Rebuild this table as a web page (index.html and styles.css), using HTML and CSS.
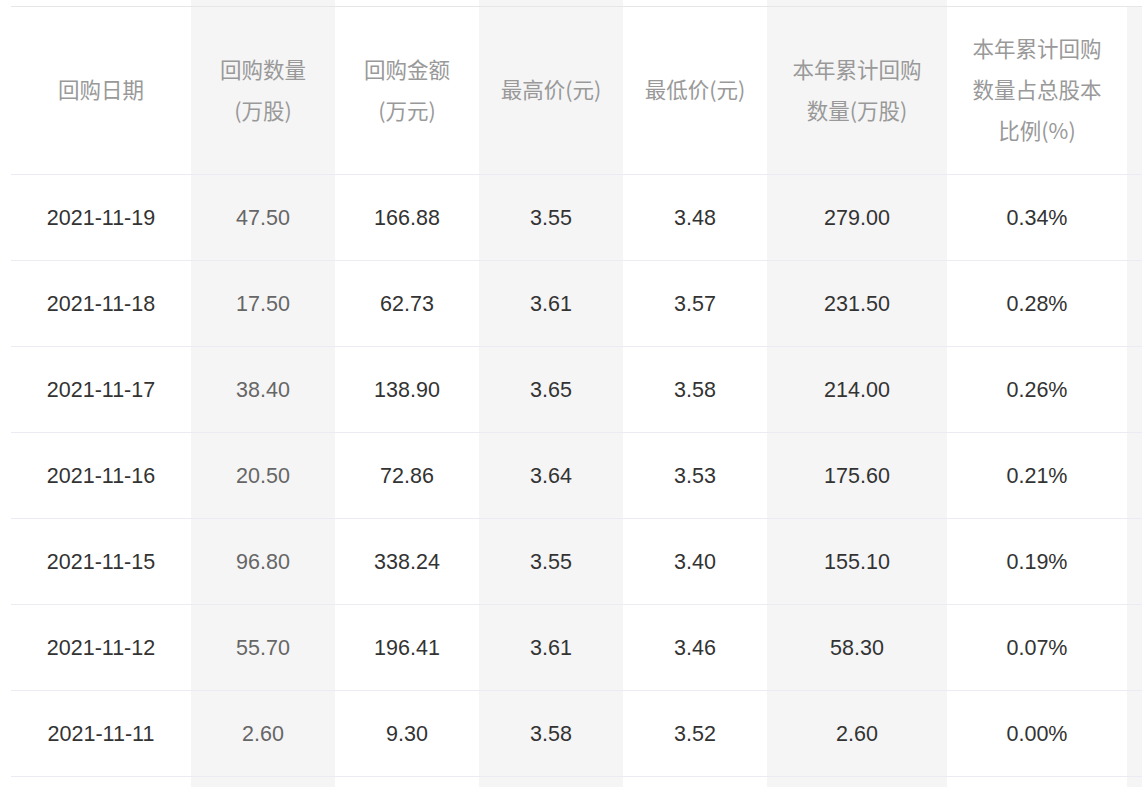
FILE: index.html
```html
<!DOCTYPE html>
<html lang="zh-CN">
<head>
<meta charset="utf-8">
<title>回购明细</title>
<link rel="stylesheet" href="styles.css">
</head>
<body>
<div class="viewport">
  <table class="buyback">
    <colgroup>
      <col class="w-wide"><col class="w-narrow"><col class="w-narrow"><col class="w-narrow"><col class="w-narrow"><col class="w-wide"><col class="w-wide"><col class="w-wide">
    </colgroup>
    <thead>
      <tr class="spacer"><td></td><td></td><td></td><td></td><td></td><td></td><td></td><td class="blank"></td></tr>
      <tr class="head">
        <th>回购日期</th>
        <th>回购数量<br>(万股)</th>
        <th>回购金额<br>(万元)</th>
        <th>最高价(元)</th>
        <th>最低价(元)</th>
        <th>本年累计回购<br>数量(万股)</th>
        <th>本年累计回购<br>数量占总股本<br>比例(%)</th>
        <th></th>
      </tr>
    </thead>
    <tbody>
      <tr><td>2021-11-19</td><td class="qty">47.50</td><td>166.88</td><td>3.55</td><td>3.48</td><td>279.00</td><td>0.34%</td><td></td></tr>
      <tr><td>2021-11-18</td><td class="qty">17.50</td><td>62.73</td><td>3.61</td><td>3.57</td><td>231.50</td><td>0.28%</td><td></td></tr>
      <tr><td>2021-11-17</td><td class="qty">38.40</td><td>138.90</td><td>3.65</td><td>3.58</td><td>214.00</td><td>0.26%</td><td></td></tr>
      <tr><td>2021-11-16</td><td class="qty">20.50</td><td>72.86</td><td>3.64</td><td>3.53</td><td>175.60</td><td>0.21%</td><td></td></tr>
      <tr><td>2021-11-15</td><td class="qty">96.80</td><td>338.24</td><td>3.55</td><td>3.40</td><td>155.10</td><td>0.19%</td><td></td></tr>
      <tr><td>2021-11-12</td><td class="qty">55.70</td><td>196.41</td><td>3.61</td><td>3.46</td><td>58.30</td><td>0.07%</td><td></td></tr>
      <tr><td>2021-11-11</td><td class="qty">2.60</td><td>9.30</td><td>3.58</td><td>3.52</td><td>2.60</td><td>0.00%</td><td></td></tr>
      <tr><td></td><td class="qty"></td><td></td><td></td><td></td><td></td><td></td><td></td></tr>
    </tbody>
  </table>
</div>
</body>
</html>
```
FILE: styles.css
```css
html, body {
  margin: 0;
  padding: 0;
  background: #fff;
  overflow: hidden;
}

.viewport {
  width: 1142px;
  height: 787px;
  overflow: hidden;
  padding-left: 11px;
  box-sizing: border-box;
}

.buyback {
  border-collapse: separate;
  border-spacing: 0;
  table-layout: fixed;
  width: 1296px;
  font-family: "Liberation Sans", "Noto Sans CJK SC", sans-serif;
  font-size: 21.5px;
  text-align: center;
}

.w-wide { width: 180px; }
.w-narrow { width: 144px; }

.buyback td,
.buyback th {
  padding: 0;
  vertical-align: middle;
}

.buyback td:nth-child(even),
.buyback th:nth-child(even) {
  background: #f5f5f5;
}

.spacer td {
  height: 6px;
  line-height: 0;
  font-size: 0;
}

.spacer td.blank {
  background: #fff;
}

.head th {
  height: 163px;
  padding-bottom: 4px;
  box-sizing: content-box;
  border-top: 1px solid #e6e6e6;
  border-bottom: 1px solid #ebebf3;
  font-weight: normal;
  color: #999;
  line-height: 41px;
  font-family: "Noto Sans CJK SC", "Liberation Sans", sans-serif;
}

.buyback tbody td {
  height: 85px;
  border-bottom: 1px solid #ebebf3;
  color: #333;
  line-height: 24px;
}

.buyback tbody td.qty {
  color: #666;
}
```
